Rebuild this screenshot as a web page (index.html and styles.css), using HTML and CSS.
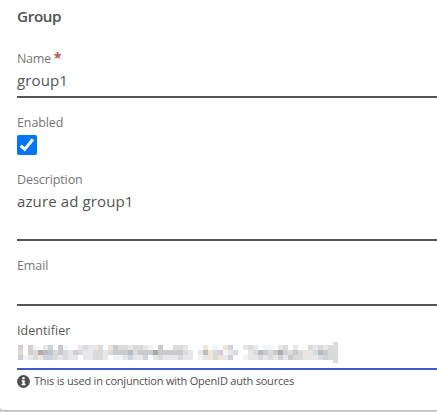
FILE: index.html
```html
<!DOCTYPE html>
<html lang="en">
<head>
<meta charset="utf-8">
<title>Group</title>
<link rel="stylesheet" href="styles.css">
</head>
<body>
<main class="card">
  <h1 class="title"><span>Group</span></h1>
  <div class="field name">
    <div class="label"><span>Name</span> <b class="required">*</b></div>
    <div class="value"><span>group1</span></div>
  </div>
  <div class="field enabled">
    <div class="label"><span>Enabled</span></div>
    <svg class="check" viewBox="0 0 20 20"><rect width="20" height="20" rx="2" fill="#0075ff"/><path d="M3.7 10.6 7.7 14.4 15.9 4.2" fill="none" stroke="#fff" stroke-width="3"/></svg>
  </div>
  <div class="field description">
    <div class="label desc-label"><span>Description</span></div>
    <div class="value desc-value"><span>azure ad group1</span></div>
  </div>
  <div class="field email">
    <div class="label"><span>Email</span></div>
  </div>
  <div class="field identifier">
    <div class="label ident-label"><span>Identifier</span></div>
    <div class="redacted"><div class="mosaic" id="mosaic"></div><i class="end"></i></div>
  </div>
  <div class="help">
    <svg class="info" viewBox="0 0 13 13"><circle cx="6.5" cy="6.5" r="6.4" fill="#505050"/><circle cx="6.5" cy="3.2" r="1.25" fill="#fff"/><path d="M4.7 5.2h3v3.6h.8v1.5H4.6V8.8h.9V6.7h-.8z" fill="#fff"/></svg>
    <span class="help-text">This is used in conjunction with OpenID auth sources</span>
  </div>
</main>
<script src="script.js"></script>
</body>
</html>
```
FILE: styles.css
```css
* { box-sizing: border-box; }
body { margin: 0; height: 412px; overflow: hidden; background: #d3d3d3; font-family: "Open Sans", sans-serif; color: #505050; }
.card { height: 410px; padding-left: 17px; background: #fff; border-bottom-left-radius: 3px; box-shadow: 0 1px 1px #bcbcbc; }
.title { margin: 0; height: 50px; padding-top: 4px; font: 600 15.2px/24px "Open Sans", sans-serif; letter-spacing: -.35px; }
.field { border-bottom: 2px solid #555; }
.label { height: 18px; font: 400 12.5px/18px "Open Sans", sans-serif; letter-spacing: -.1px; color: #777; }
.required { display: inline-block; height: 12px; font-size: 14px; line-height: 16px; vertical-align: top; color: #b55353; }
.name .label span { letter-spacing: -.35px; }
.value { font: 400 15px/24px "Open Sans", sans-serif; letter-spacing: .12px; color: #555; }
.name { height: 48px; }
.enabled { height: 73px; padding-top: 16px; border: 0; }
.check { display: block; width: 20px; height: 20px; margin-top: 3px; }
.description { height: 70px; }
.email { height: 65px; padding-top: 16px; }
.identifier { height: 64px; padding-top: 16px; border-color: #3f5bcc; }
.ident-label { color: #585858; letter-spacing: .05px; }
.redacted { display: flex; height: 22px; padding-left: 1px; }
.mosaic { display: grid; grid-template-columns: repeat(63, 5px); grid-auto-rows: 5px; padding-top: 5px; }
.end { width: 5px; height: 21px; margin-top: 2px; background: #dbdbdc; }
.help { display: flex; align-items: center; gap: 4px; height: 21px; padding-top: 1px; }
.info { width: 13px; height: 13px; }
.help-text { font: 400 11px/16px "Open Sans", sans-serif; letter-spacing: -.21px; white-space: nowrap; }
```
FILE: script.js
```js
const tones = {
  w: "#ffffff", f: "#f4f4f5", a: "#e7e7e9", b: "#dadadb", c: "#c9cacb",
  d: "#b9bcbf", e: "#b4aaa5", g: "#a5aaab", p: "#d5cdd2", l: "#ced3db",
  n: "#eef4fa", o: "#efe3da", t: "#bac7cd"
};
const rows = [
  "pwpfwalwcnwwabaabwocbbabbafwcwwbbawwwownwolwwabawfnwabwawwbababw",
  "bwpbedtbcbapbaabbabcccdbcccgcccccbawadobpnabwwabdcbcelbcboabdcb",
  "pnaballbabaawaabbawnnalaalwabaaabaawfaoboapwwnaababalacbbaaablb"
];
const mosaic = document.getElementById("mosaic");
for (const row of rows) {
  for (const tone of row.padEnd(63, "b").slice(0, 63)) {
    const cell = document.createElement("i");
    cell.style.background = tones[tone];
    mosaic.append(cell);
  }
}
```
